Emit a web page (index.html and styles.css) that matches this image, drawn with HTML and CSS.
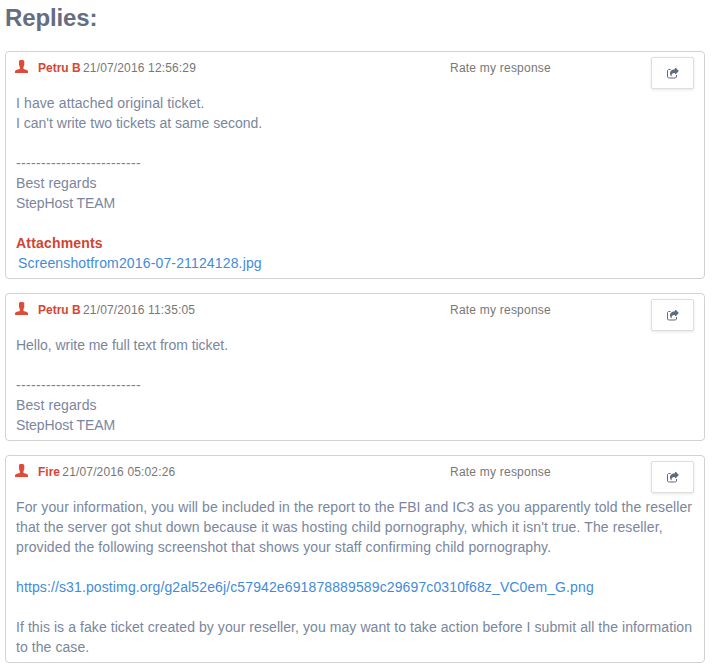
FILE: index.html
```html
<!DOCTYPE html>
<html lang="en">
<head>
<meta charset="utf-8">
<title>Replies</title>
<link rel="stylesheet" href="styles.css">
</head>
<body>
<svg width="0" height="0" class="defs" aria-hidden="true">
  <symbol id="user" viewBox="0 0 13 13"><path d="M5 0H8L9.300 1V5L8.500 7V9L12 10L13 11.300V13H0V11.300L1 10L4.800 9V7L4 5V1Z"/></symbol>
  <symbol id="share" viewBox="0 0 12 11"><path d="M3.500 1.500H1.500L.5 2.500V9L1.500 10H8.500L9.500 9V7" fill="none" stroke="currentColor" stroke-width="1"/><path d="M8 0H9L11.800 3L9 6H8V4.900C5.600 4.800 4.300 5.400 4.600 8.200H4C1.900 5 3.200 1.300 8 1.200Z" fill="currentColor"/></symbol>
</svg>
<h1>Replies:</h1>
<main class="replies">
  <article class="reply">
    <header class="head">
      <svg class="user"><use href="#user"/></svg>
      <div class="meta"><b>Petru B</b> <time>21/07/2016 12:56:29</time></div>
      <div class="rate">Rate my response</div>
      <button class="share" aria-label="Share"><svg><use href="#share"/></svg></button>
    </header>
    <div class="body"><span class="loose">I have attached original ticket.</span><br>I can't write two tickets at same second.<br><br><span class="rule">-------------------------</span><br><span class="loose">Best regards</span><br><span class="tight">StepHost TEAM</span><br><br><b class="att">Attachments</b><br><a class="file">Screenshotfrom2016-07-21124128.jpg</a></div>
  </article>
  <article class="reply">
    <header class="head">
      <svg class="user"><use href="#user"/></svg>
      <div class="meta"><b>Petru B</b> <time>21/07/2016 11:35:05</time></div>
      <div class="rate">Rate my response</div>
      <button class="share" aria-label="Share"><svg><use href="#share"/></svg></button>
    </header>
    <div class="body"><span class="snug">Hello, write me full text from ticket.</span><br><br><span class="rule">-------------------------</span><br><span class="loose">Best regards</span><br><span class="tight">StepHost TEAM</span></div>
  </article>
  <article class="reply">
    <header class="head">
      <svg class="user"><use href="#user"/></svg>
      <div class="meta"><b>Fire</b> <time>21/07/2016 05:02:26</time></div>
      <div class="rate">Rate my response</div>
      <button class="share" aria-label="Share"><svg><use href="#share"/></svg></button>
    </header>
    <div class="body"><span class="loose">For your information, you will be included in the report to the FBI and IC3 as you apparently told the reseller<br>that the server got shut down because it was hosting child pornography, which it isn't true. The reseller,<br>provided the following screenshot that shows your staff confirming child pornography.</span><br><br><a class="url">https://s31.postimg.org/g2al52e6j/c57942e691878889589c29697c0310f68z_VC0em_G.png</a><br><br><span class="mild">If this is a fake ticket created by your reseller, you may want to take action before I submit all the information<br>to the case.</span></div>
  </article>
</main>
</body>
</html>
```
FILE: styles.css
```css
* { box-sizing: border-box; }
body {
  margin: 0;
  padding: 4px 9px 0 5px;
  background: #fff;
  color: #7a869d;
  font: 14px/20px "Liberation Sans", Arial, sans-serif;
}
.defs { position: absolute; }
h1 {
  margin: 0 0 19px;
  color: #656d80;
  font-size: 24px;
  line-height: 28px;
  font-weight: bold;
  letter-spacing: -.12px;
}
.replies { display: grid; gap: 14px; }
.reply {
  border: 1px solid #d2d2d2;
  border-radius: 4px;
  padding: 5px 10px 5px 8px;
}
.head {
  display: grid;
  grid-template-columns: 24px 412px 1fr 43px;
  height: 36px;
  align-items: start;
  color: #777;
  font-size: 12px;
}
.user { width: 13px; height: 13px; margin: 3px 0 0 1px; fill: #dd4b39; }
.meta, .rate { padding-top: 1px; white-space: nowrap; }
.meta b { color: #d64635; margin-right: -1px; }
.meta time { letter-spacing: .15px; }
.rate { letter-spacing: .22px; }
.share {
  width: 43px;
  height: 32px;
  padding: 0;
  display: flex;
  align-items: center;
  justify-content: center;
  border: 1px solid #dedede;
  border-radius: 2px;
  background: #fff;
  color: #5e6b80;
  box-shadow: 0 1px 3px rgba(0, 0, 0, .1);
}
.share svg { width: 12px; height: 11px; }
.body { padding-left: 2px; white-space: nowrap; }
.body a { color: #428bda; }
.body .file { padding-left: 2px; letter-spacing: .15px; }
.body .url { letter-spacing: .12px; }
.att { color: #d24330; letter-spacing: .18px; }
.loose { letter-spacing: .104px; }
.mild { letter-spacing: .074px; }
.snug { letter-spacing: -.03px; }
.tight { letter-spacing: -.07px; }
.rule { letter-spacing: .34px; }
```
